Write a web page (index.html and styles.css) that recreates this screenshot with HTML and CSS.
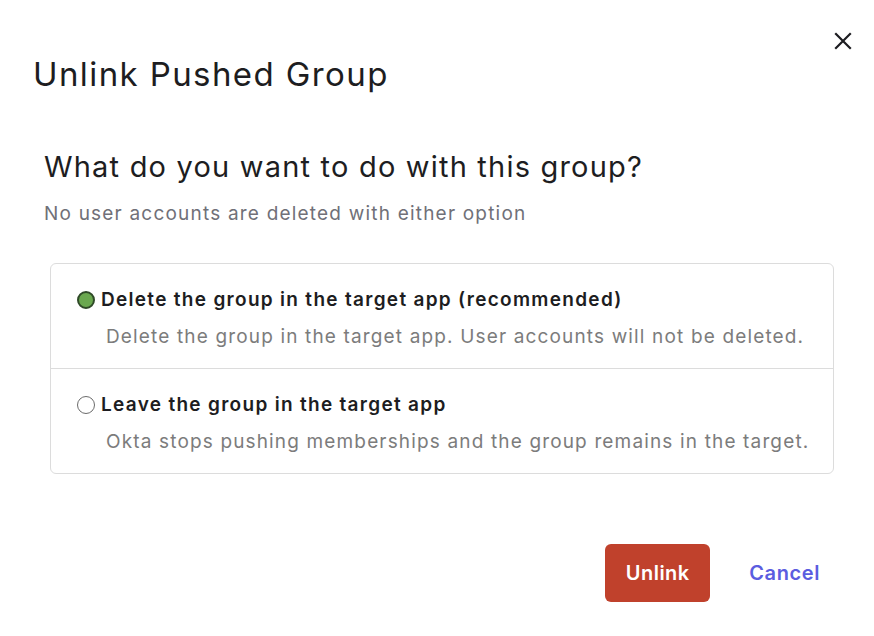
FILE: index.html
```html
<!DOCTYPE html>
<html lang="en">
<head>
<meta charset="utf-8">
<title>Unlink Pushed Group</title>
<link rel="stylesheet" href="styles.css">
</head>
<body>
<div class="dialog">
  <div class="header">
    <h1 class="title">Unlink Pushed Group</h1>
    <button class="close" aria-label="Close">
      <svg width="18" height="18" viewBox="0 0 18 18"><path d="M2 2L16 16M16 2L2 16" stroke="#1d1d21" stroke-width="2.2" stroke-linecap="square" fill="none"/></svg>
    </button>
  </div>
  <div class="body">
    <h2 class="question">What do you want to do with this group?</h2>
    <p class="hint">No user accounts are deleted with either option</p>
    <div class="options">
      <label class="option">
        <span class="radio checked"></span>
        <span class="text">
          <span class="label">Delete the group in the target app (recommended)</span>
          <span class="desc">Delete the group in the target app. User accounts will not be deleted.</span>
        </span>
      </label>
      <label class="option">
        <span class="radio"></span>
        <span class="text">
          <span class="label">Leave the group in the target app</span>
          <span class="desc">Okta stops pushing memberships and the group remains in the target.</span>
        </span>
      </label>
    </div>
  </div>
  <div class="footer">
    <button class="btn-danger">Unlink</button>
    <button class="btn-link">Cancel</button>
  </div>
</div>
</body>
</html>
```
FILE: styles.css
```css
* { box-sizing: border-box; }
html, body { margin: 0; padding: 0; background: #ffffff; }
body { font-family: Inter, "Noto Sans", "Liberation Sans", sans-serif; color: #1d1d21; }
.dialog { width: 874px; height: 636px; display: flex; flex-direction: column; }
.header { display: flex; justify-content: space-between; align-items: flex-start; padding: 28px 18px 0 33px; }
.title { margin: 26px 0 0; font-size: 33px; font-weight: 400; letter-spacing: 1.4px; line-height: 40px; }
.close { background: none; border: 0; padding: 4px; margin: 0; cursor: pointer; display: flex; }
.body { padding: 0 40px 0 44px; }
.question { margin: 55px 0 0; font-size: 29px; font-weight: 400; line-height: 36px; letter-spacing: 1.2px; }
.hint { margin: 17px 0 0; font-size: 19px; color: #707078; line-height: 24px; letter-spacing: 1.2px; }
.options { margin: 37px 0 0 6px; border: 1px solid #dcdcdc; border-radius: 6px; display: flex; flex-direction: column; }
.option { display: flex; align-items: flex-start; padding: 24px 20px 19px 26px; gap: 6px; }
.option + .option { border-top: 1px solid #dcdcdc; }
.radio { width: 18px; height: 18px; border-radius: 50%; border: 1.5px solid #6b6b6b; margin-top: 3px; flex-shrink: 0; }
.radio.checked { background: #6aa84f; border: 2.5px solid #2f4a28; }
.text { display: flex; flex-direction: column; gap: 13px; }
.label { font-size: 19px; font-weight: 600; line-height: 24px; color: #1d1d21; letter-spacing: 1.3px; }
.desc { font-size: 19px; color: #7c7c7c; line-height: 24px; padding-left: 5px; letter-spacing: 1.15px; }
.footer { display: flex; justify-content: flex-end; align-items: center; gap: 39px; padding: 70px 54px 0 0; }
.btn-danger { background: #c0412c; color: #fff; border: 0; border-radius: 6px; height: 58px; width: 105px; font: 600 20px Inter, "Liberation Sans", sans-serif; letter-spacing: 0.5px; cursor: pointer; }
.btn-link { background: none; border: 0; color: #5b5de0; font: 600 20px Inter, "Liberation Sans", sans-serif; letter-spacing: 0.6px; padding: 0; cursor: pointer; }
```
